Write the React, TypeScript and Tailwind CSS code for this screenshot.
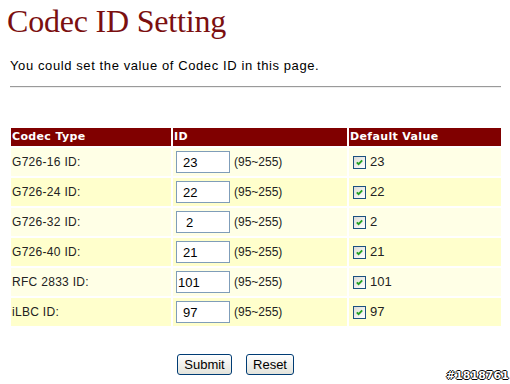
import React from 'react';

const rows = [
  { label: 'G726-16 ID:', value: '23', pad: 'pl-[6px]', def: '23' },
  { label: 'G726-24 ID:', value: '22', pad: 'pl-[6px]', def: '22' },
  { label: 'G726-32 ID:', value: '2', pad: 'pl-[9px]', def: '2' },
  { label: 'G726-40 ID:', value: '21', pad: 'pl-[6px]', def: '21' },
  { label: 'RFC 2833 ID:', value: '101', pad: 'pl-[1px]', def: '101' },
  { label: 'iLBC ID:', value: '97', pad: 'pl-[6px]', def: '97' },
];

const CheckBox = () => (
  <span className="w-[13px] h-[13px] border border-[#1c5180] bg-gradient-to-br from-[#dcdcd7] to-white flex items-center justify-center">
    <svg width="9" height="9" viewBox="0 0 9 9">
      <path d="M1.8 4.3 L3.6 6.2 L7.2 2.4" stroke="#21a121" strokeWidth="1.8" fill="none" />
    </svg>
  </span>
);

const XpButton: React.FC<{ label: string; w: string }> = ({ label, w }) => (
  <button className={`${w} h-[21px] rounded-[3px] border border-[#003c74] bg-gradient-to-b from-white to-[#e3e3db] text-[13px] text-black leading-none`}>
    {label}
  </button>
);

export default function App() {
  return (
    <div className="relative w-[510px] h-[384px] bg-white overflow-hidden font-['Liberation_Sans',Arial,sans-serif]">
      <h1 className="pl-[7px] pt-[2px] text-[32px] leading-[38px] text-[#7b0f10] font-['Liberation_Serif','Times_New_Roman',serif] tracking-[-0.2px]">
        Codec ID Setting
      </h1>
      <p className="pl-[10px] mt-[18px] text-[13px] leading-[16px] tracking-[0.6px] text-black">
        You could set the value of Codec ID in this page.
      </p>
      <div className="ml-[10px] mr-[9px] mt-[12px] h-[2px] border-t border-[#9a9a9a] border-b border-b-[#eeeeee]" />

      <div className="ml-[11px] mt-[40px] flex flex-col gap-[2px] w-[490px]">
        <div className="grid grid-cols-[160px_174px_152px] gap-[2px] h-[18px] text-[11px] font-bold tracking-[0.35px] text-white font-['DejaVu_Sans',Verdana,sans-serif]">
          <div className="bg-[#800000] pl-[1px] flex items-center">Codec Type</div>
          <div className="bg-[#800000] pl-[1px] flex items-center">ID</div>
          <div className="bg-[#800000] pl-[1px] flex items-center">Default Value</div>
        </div>
        {rows.map((r, i) => (
          <div
            key={r.label}
            className="grid grid-cols-[160px_174px_152px] gap-[2px] h-[28px] text-[12px] text-[#222]"
          >
            <div className={`${i % 2 === 0 ? 'bg-[#ffffe6]' : 'bg-[#ffffcc]'} flex items-center pl-[1px] tracking-[0.3px]`}>{r.label}</div>
            <div className={`${i % 2 === 0 ? 'bg-[#ffffe6]' : 'bg-[#ffffcc]'} flex items-center pl-[3px] gap-[4px]`}>
              <input
                readOnly
                defaultValue={r.value}
                className={`w-[54px] h-[22px] border border-[#7f9db9] bg-white text-[13px] text-black outline-none ${r.pad}`}
              />
              <span>(95~255)</span>
            </div>
            <div className={`${i % 2 === 0 ? 'bg-[#ffffe6]' : 'bg-[#ffffcc]'} flex items-center pl-[4px] gap-[4px]`}>
              <CheckBox />
              <span className="text-[13px]">{r.def}</span>
            </div>
          </div>
        ))}
      </div>

      <div className="mt-[28px] ml-[177px] flex gap-[14px]">
        <XpButton label="Submit" w="w-[55px]" />
        <XpButton label="Reset" w="w-[48px]" />
      </div>

      <span className="absolute left-[446px] top-[368px] text-[11px] font-bold text-white font-['DejaVu_Sans',sans-serif] [text-shadow:1px_0_0_#000,-1px_0_0_#000,0_1px_0_#000,0_-1px_0_#000]">
        #1818761
      </span>
    </div>
  );
}
